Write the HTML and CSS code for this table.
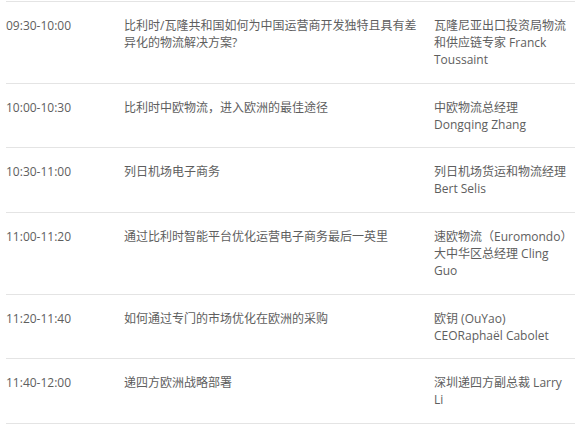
FILE: index.html
```html
<!DOCTYPE html>
<html lang="zh-CN">
<head>
<meta charset="utf-8">
<link rel="stylesheet" href="styles.css">
</head>
<body>
<div class="agenda">
  <div class="row">
    <div class="time">09:30-10:00</div>
    <div class="topic">比利时/瓦隆共和国如何为中国运营商开发独特且具有差异化的物流解决方案?</div>
    <div class="speaker">瓦隆尼亚出口投资局物流和供应链专家 Franck Toussaint</div>
  </div>
  <div class="row">
    <div class="time">10:00-10:30</div>
    <div class="topic">比利时中欧物流，进入欧洲的最佳途径</div>
    <div class="speaker">中欧物流总经理<br>Dongqing Zhang</div>
  </div>
  <div class="row">
    <div class="time">10:30-11:00</div>
    <div class="topic">列日机场电子商务</div>
    <div class="speaker">列日机场货运和物流经理<br>Bert Selis</div>
  </div>
  <div class="row">
    <div class="time">11:00-11:20</div>
    <div class="topic">通过比利时智能平台优化运营电子商务最后一英里</div>
    <div class="speaker">速欧物流（Euromondo）大中华区总经理 Cling Guo</div>
  </div>
  <div class="row">
    <div class="time">11:20-11:40</div>
    <div class="topic">如何通过专门的市场优化在欧洲的采购</div>
    <div class="speaker">欧钥 (OuYao)<br>CEORaphaël Cabolet</div>
  </div>
  <div class="row">
    <div class="time">11:40-12:00</div>
    <div class="topic">递四方欧洲战略部署</div>
    <div class="speaker">深圳递四方副总裁 Larry Li</div>
  </div>
</div>
</body>
</html>
```

FILE: styles.css
```css
html, body {
  margin: 0;
  padding: 0;
  background: #ffffff;
}
body {
  padding: 1px 0 0 6px;
  font-family: "Open Sans", "Noto Sans CJK SC", sans-serif;
  font-size: 12px;
  line-height: 17px;
  color: #5e5e5e;
}
.agenda {
  width: 569px;
  border-bottom: 1px solid #e4e4e4;
}
.row {
  display: grid;
  grid-template-columns: 118px 310px 141px;
  border-top: 1px solid #e4e4e4;
  padding: 15px 0 14.67px;
}
.topic {
  padding-right: 12px;
}
.speaker {
  padding-right: 4px;
}
```
